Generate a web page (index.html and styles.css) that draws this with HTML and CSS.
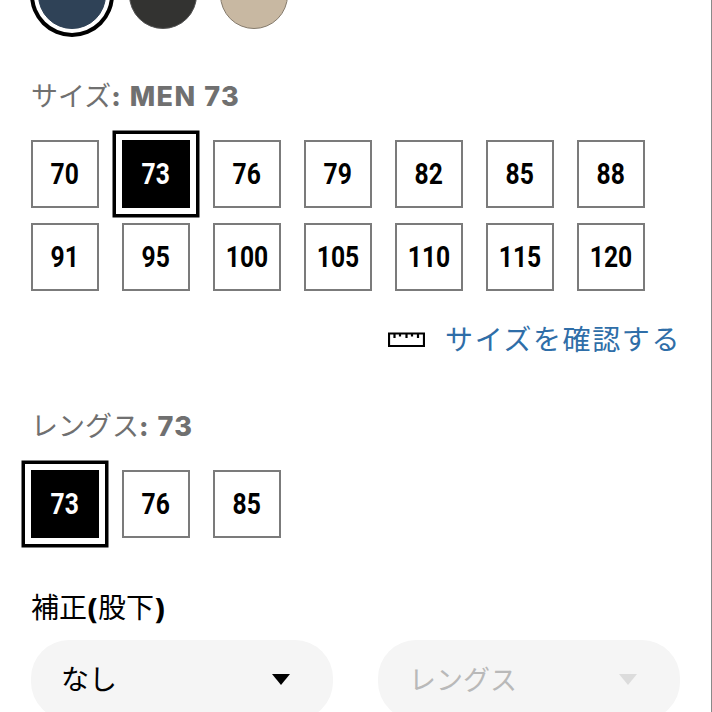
FILE: index.html
```html
<!DOCTYPE html>
<html lang="ja">
<head>
<meta charset="utf-8">
<title>サイズ選択</title>
<link rel="stylesheet" href="styles.css">
</head>
<body>
<main class="page">
  <div class="swatches">
    <span class="swatch navy selected"></span>
    <span class="swatch charcoal"></span>
    <span class="swatch beige"></span>
  </div>

  <h2 class="label size-label">サイズ<b>: MEN 73</b></h2>
  <div class="sizes">
    <button class="size"><span>70</span></button>
    <button class="size selected"><span>73</span></button>
    <button class="size"><span>76</span></button>
    <button class="size"><span>79</span></button>
    <button class="size"><span>82</span></button>
    <button class="size"><span>85</span></button>
    <button class="size"><span>88</span></button>
    <button class="size"><span>91</span></button>
    <button class="size"><span>95</span></button>
    <button class="size"><span>100</span></button>
    <button class="size"><span>105</span></button>
    <button class="size"><span>110</span></button>
    <button class="size"><span>115</span></button>
    <button class="size"><span>120</span></button>
  </div>

  <div class="guide">
    <svg class="ruler" viewBox="0 0 37 15" aria-hidden="true">
      <path d="M1 1.500h35v12.500H1z M6.500 1.500v4.500 M12 1.500v3 M18.500 1.500v4.500 M24 1.500v3 M30 1.500v4.500" fill="none" stroke="#000" stroke-width="2.200"/>
    </svg>
    <a class="guide-link">サイズを確認する</a>
  </div>

  <h2 class="label length-label">レングス<b>: 73</b></h2>
  <div class="sizes">
    <button class="size selected"><span>73</span></button>
    <button class="size"><span>76</span></button>
    <button class="size"><span>85</span></button>
  </div>

  <h2 class="label hem-label">補正<b>(</b>股下<b>)</b></h2>
  <div class="selects">
    <div class="select"><span>なし</span><i class="caret"></i></div>
    <div class="select disabled"><span>レングス</span><i class="caret"></i></div>
  </div>
</main>
</body>
</html>
```
FILE: styles.css
```css
* { box-sizing: border-box; }
html, body { margin: 0; padding: 0; background: #fff; }
.page {
  width: 712px;
  height: 712px;
  overflow: hidden;
  padding: 0 31px;
  border-right: 1px solid #8a8a8a;
  font-family: "Noto Sans CJK JP", "Noto Sans", sans-serif;
  color: #000;
}
.swatches {
  display: flex;
  gap: 23px;
  margin-top: -39px;
  height: 68px;
}
.swatch {
  width: 68px;
  height: 68px;
  border-radius: 50%;
  flex: none;
  border: 1px solid #777;
}
.navy { background: #2f4257; border-color: #2f4257; }
.charcoal { background: #333331; border-color: #555; }
.beige { background: #c8b8a2; border-color: #857b6d; }
.swatch.selected { box-shadow: 0 0 0 4px #fff, 0 0 0 8px #000; margin-left: 7px; }

.label {
  margin: 0;
  height: 34px;
  line-height: 34px;
  font-size: 27px;
  font-weight: 400;
  color: #707070;
  white-space: nowrap;
}
.label b {
  font-family: Inter, "Liberation Sans", sans-serif;
  font-weight: 800;
  font-size: 27px;
  letter-spacing: 1.500px;
}
.size-label { margin-top: 49px; margin-bottom: 28px; }
.length-label { margin-top: 50px; margin-bottom: 28px; }
.hem-label { margin-top: 51px; margin-bottom: 17px; color: #000; font-size: 28px; }
.hem-label b {
  font-family: "Noto Sans", sans-serif;
  font-size: 29px;
  font-weight: 800;
  letter-spacing: 0;
  margin: 0 0.500px;
}

.sizes {
  display: grid;
  grid-template-columns: repeat(7, 68px);
  grid-auto-rows: 68px;
  gap: 15px 23px;
}
.size {
  padding: 0;
  background: #fff;
  border: 2px solid #7b7b7b;
  color: #000;
  font-family: Roboto, sans-serif;
  font-weight: 700;
  font-size: 29px;
}
.size span {
  display: inline-block;
  transform: scaleX(0.85);
  margin: 0 -6px;
}
.size.selected {
  background: #000;
  border-color: #000;
  color: #fff;
  box-shadow: 0 0 0 6px #fff, 0 0 0 9.500px #000;
}

.guide {
  display: flex;
  align-items: center;
  justify-content: flex-end;
  gap: 20px;
  height: 40px;
  margin-top: 27px;
  margin-right: -1px;
}
.ruler { width: 37px; height: 15px; flex: none; margin-top: 2px; }
.guide-link {
  font-size: 28px;
  letter-spacing: 1.600px;
  color: #2f6ea8;
  line-height: 40px;
}

.selects { display: flex; gap: 45px; }
.select {
  width: 302px;
  height: 80px;
  flex: none;
  border-radius: 38px;
  background: #f5f5f5;
  padding: 0 43px 0 30px;
  display: flex;
  align-items: center;
  justify-content: space-between;
  font-size: 28px;
}
.select > span { margin-top: -4px; }
.caret {
  width: 0;
  height: 0;
  margin-top: -2px;
  border-left: 9.500px solid transparent;
  border-right: 9.500px solid transparent;
  border-top: 11px solid #000;
}
.select.disabled { color: #b9b9b9; font-size: 27px; padding-left: 31px; }
.select.disabled .caret { border-top-color: #dcdcdc; }
```
